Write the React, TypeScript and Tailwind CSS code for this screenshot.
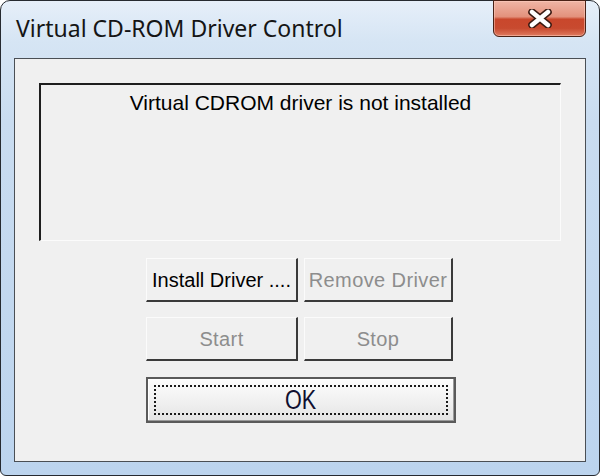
const CloseGlyph = () => (
  <svg width="26" height="19" viewBox="0 0 26 19">
    <path d="M5 3 L21 16 M21 3 L5 16" stroke="#3a1a12" strokeWidth="7.5" strokeLinecap="round" fill="none" />
    <path d="M5 3 L21 16 M21 3 L5 16" stroke="#ffffff" strokeWidth="4.5" strokeLinecap="round" fill="none" />
  </svg>
);

const SmallButton = ({ label, disabled }: { label: string; disabled?: boolean }) => (
  <div
    className={
      "h-[44px] flex items-center justify-center overflow-hidden whitespace-nowrap border-t border-l border-t-[#fbfbfb] border-l-[#fbfbfb] border-r-2 border-b-2 border-r-[#3a3a3a] border-b-[#3a3a3a] bg-[#f0f0f0] text-[20px] " +
      (disabled ? "text-[#8d8d8d] tracking-[0.4px]" : "text-black")
    }
    style={{ fontFamily: '"Liberation Sans", Arial, sans-serif' }}
  >
    {label}
  </div>
);

export default function App() {
  return (
    <div className="w-[600px] h-[476px] bg-white">
      <div className="relative w-[600px] h-[476px] rounded-t-[10px] rounded-b-[6px] border border-[#262a30] bg-[linear-gradient(to_bottom,#e6eff9_0px,#d6e5f4_40px,#c9dcf0_120px,#bcd4ee_100%)] flex flex-col px-[13px] pb-[13px]">
        {/* title bar */}
        <div className="h-[57px] shrink-0 flex items-start">
          <div
            className="pl-[2px] pt-[16px] text-[23px] text-[#151515] leading-none"
            style={{ fontFamily: '"Noto Sans", "Open Sans", sans-serif' }}
          >
            Virtual CD-ROM Driver Control
          </div>
        </div>
        <div className="absolute top-[-1px] right-[13px] w-[93px] h-[37px] rounded-b-[6px] border border-[#4a2216] bg-[linear-gradient(to_bottom,#efb6a6_0%,#e3917c_45%,#c9472c_52%,#c84a2f_78%,#df7b60_100%)] shadow-[inset_0_0_0_1px_rgba(255,210,195,0.5)] flex items-center justify-center">
          <CloseGlyph />
        </div>

        {/* client area */}
        <div className="flex-1 border border-[#4a4f55] bg-[#f0f0f0] flex flex-col">
          <div className="ml-[24px] mt-[24px] w-[522px] h-[158px] border-t-2 border-l-2 border-t-[#1e1e1e] border-l-[#1e1e1e] border-b border-r border-b-[#fbfbfb] border-r-[#fbfbfb] flex justify-center">
            <div
              className="pt-[7px] text-[21px] leading-none text-black"
              style={{ fontFamily: '"Liberation Sans", Arial, sans-serif' }}
            >
              Virtual CDROM driver is not installed
            </div>
          </div>

          <div className="ml-[131px] mt-[17px] w-[307px] grid grid-cols-[152px_149px] gap-x-[6px] gap-y-[15px]">
            <SmallButton label="Install Driver ...." />
            <SmallButton label="Remove Driver" disabled />
            <SmallButton label="Start" disabled />
            <SmallButton label="Stop" disabled />
          </div>

          <div className="ml-[131px] mt-[16px] w-[310px] h-[46px] border-2 border-[#5a5a5a] bg-[linear-gradient(to_bottom,#fdfdfd_0%,#f1f1f1_50%,#e4e4e4_100%)] shadow-[inset_-1px_-1px_0_#9a9a9a,inset_1px_1px_0_#ffffff] p-[6px]">
            <div
              className="w-full h-full border-2 border-dotted border-[#1a1a1a] flex items-center justify-center text-[27px] text-[#101030] leading-none"
              style={{ fontFamily: '"Liberation Sans", Arial, sans-serif' }}
            >
              <span className="inline-block scale-x-[0.8]">OK</span>
            </div>
          </div>
        </div>
      </div>
    </div>
  );
}
